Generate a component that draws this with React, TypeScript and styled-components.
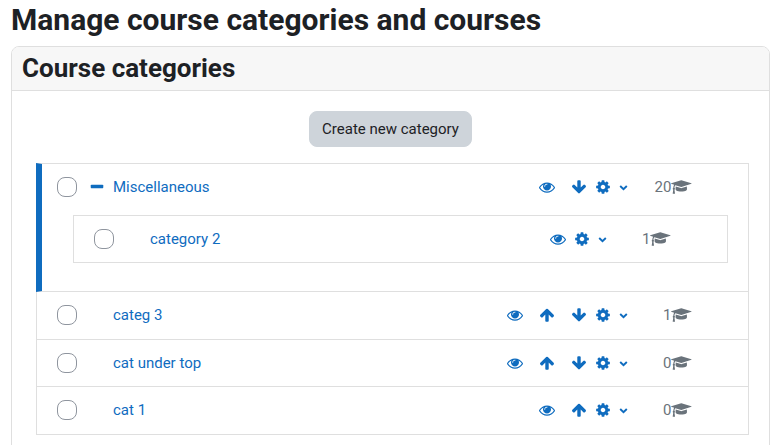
import React from "react";
import styled, { createGlobalStyle } from "styled-components";

const GlobalStyle = createGlobalStyle`
  *, *::before, *::after { box-sizing: border-box; }
  body {
    margin: 0;
    background: #fff;
    color: #1d2125;
    font-family: Roboto, "Liberation Sans", sans-serif;
    font-size: 15px;
    line-height: 1.5;
  }
`;

const blue = "#0f6cbf";
const line = "#dfdfdf";

const glyphs = {
  eye: {
    width: 1792,
    d: "M1664 960q-152-236-381-353 61 104 61 225 0 185-131.5 316.5t-316.5 131.5-316.5-131.5-131.5-316.5q0-121 61-225-229 117-381 353 133 205 333.5 326.5t434.5 121.5 434.5-121.5 333.5-326.5zm-720-384q0-20-14-34t-34-14q-125 0-214.5 89.5t-89.5 214.5q0 20 14 34t34 14 34-14 14-34q0-86 61-147t147-61q20 0 34-14t14-34zm848 384q0 34-20 69-140 230-376.5 368.5t-499.5 138.5-499.5-139-376.5-368q-20-35-20-69t20-69q140-229 376.5-368t499.5-139 499.5 139 376.5 368q20 35 20 69z",
  },
  up: {
    width: 1792,
    d: "M1675 971q0 51-37 90l-75 75q-38 38-91 38-54 0-90-38l-294-293v704q0 52-37.5 84.5t-90.5 32.5h-128q-53 0-90.5-32.5t-37.5-84.5v-704l-294 293q-36 38-90 38t-90-38l-75-75q-38-38-38-90 0-53 38-91l651-651q35-37 90-37 54 0 91 37l651 651q37 39 37 91z",
  },
  down: {
    width: 1792,
    d: "M1675 832q0 53-37 90l-651 652q-39 37-91 37-53 0-90-37l-651-652q-38-36-38-90 0-53 38-91l74-75q39-37 91-37 53 0 90 37l294 294v-704q0-52 38-90t90-38h128q52 0 90 38t38 90v704l294-294q37-37 90-37 52 0 91 37l75 75q37 39 37 91z",
  },
  cog: {
    width: 1792,
    d: "M1152 896q0-106-75-181t-181-75-181 75-75 181 75 181 181 75 181-75 75-181zm512-109v222q0 12-8 23t-20 13l-185 28q-19 54-39 91 35 50 107 138 10 12 10 25t-9 23q-27 37-99 108t-94 71q-12 0-26-9l-138-108q-44 23-91 38-16 136-29 186-7 28-36 28h-222q-14 0-24.5-8.5t-11.5-21.5l-28-184q-49-16-90-37l-141 107q-10 9-25 9-14 0-25-11-126-114-165-168-7-10-7-23 0-12 8-23 15-21 51-66.5t54-70.5q-27-50-41-99l-183-27q-13-2-21-12.5t-8-23.5v-222q0-12 8-23t19-13l186-28q14-46 39-92-40-57-107-138-10-12-10-24 0-10 9-23 26-36 98.5-107.5t94.5-71.5q13 0 26 10l138 107q44-23 91-38 16-136 29-186 7-28 36-28h222q14 0 24.5 8.5t11.5 21.5l28 184q49 16 90 37l142-107q9-9 24-9 13 0 25 10 129 119 165 170 7 8 7 22 0 12-8 23-15 21-51 66.5t-54 70.5q26 50 41 98l183 28q13 2 21 12.5t8 23.5z",
  },
  cap: {
    width: 2304,
    d: "M1774 836l18 316q4 69-82 128t-235 93.5-323 34.5-323-34.5-235-93.5-82-128l18-316 574 181q22 7 48 7t48-7zm530-324q0 23-22 31l-1120 352q-4 1-10 1t-10-1l-652-206q-43 34-71 111.5t-34 178.5q63 36 63 109 0 69-58 107l58 433q2 14-8 25-9 11-24 11h-192q-15 0-24-11-10-11-8-25l58-433q-58-38-58-107 0-73 65-111 11-207 98-330l-333-104q-22-8-22-31t22-31l1120-352q4-1 10-1t10 1l1120 352q22 8 22 31z",
  },
  minus: {
    width: 1792,
    d: "M1600 736v192q0 40-28 68t-68 28h-1216q-40 0-68-28t-28-68v-192q0-40 28-68t68-28h1216q40 0 68 28t28 68z",
  },
};

type GlyphName = keyof typeof glyphs;

const GlyphSvg = styled.svg`
  display: block;
  flex: none;
  height: 16px;
  fill: currentColor;
`;

const Glyph = ({ name }: { name: GlyphName }) => (
  <GlyphSvg viewBox={`0 0 ${glyphs[name].width} 1792`} aria-hidden="true">
    <path d={glyphs[name].d} />
  </GlyphSvg>
);

const Chevron = styled.svg`
  display: block;
  width: 9px;
  height: 16px;
  fill: none;
  stroke: currentColor;
  stroke-width: 1.9;
`;

const Page = styled.main`
  padding: 0 11px;
`;

const PageTitle = styled.h1`
  margin: 0;
  padding: 2px 0 8px;
  font-size: 30px;
  font-weight: 700;
  line-height: 36px;
`;

const Card = styled.section`
  border: 1px solid ${line};
  border-radius: 8px;
  overflow: hidden;
`;

const CardTitle = styled.h2`
  margin: 0;
  padding: 5px 10px;
  border-bottom: 1px solid ${line};
  background: #f7f7f7;
  font-size: 26px;
  font-weight: 700;
  line-height: 33px;
`;

const CardBody = styled.div`
  padding: 20px;
`;

const Toolbar = styled.div`
  display: flex;
  justify-content: center;
  margin-bottom: 16px;
`;

const CreateButton = styled.button`
  padding: 6px 12px;
  border: 1px solid #ced4da;
  border-radius: 8px;
  background: #ced4da;
  color: #1d2125;
  font: inherit;
  line-height: 22px;
  cursor: pointer;
`;

const CategoryList = styled.ul`
  margin: 0 0 0 4px;
  padding: 0;
  list-style: none;
`;

const NestedList = styled.ul`
  margin: 16px 0 16px 16px;
  padding: 0;
  list-style: none;
`;

const CategoryItem = styled.li<{ $expanded: boolean }>`
  padding: 12px 20px 12px ${(p) => (p.$expanded ? 15 : 20)}px;
  border: 1px solid ${line};
  border-left: ${(p) => (p.$expanded ? `6px solid ${blue}` : `1px solid ${line}`)};

  & + & {
    border-top: 0;
  }
`;

const ItemRow = styled.div`
  display: flex;
  align-items: center;
  height: 1.5em;
`;

const CheckBox = styled.input`
  appearance: none;
  flex: none;
  width: 20px;
  height: 20px;
  margin: 0;
  border: 1px solid #8f959e;
  border-radius: 8px;
  background: #fff;

  &:checked {
    background: ${blue};
  }
`;

const IconButton = styled.button`
  display: flex;
  align-items: center;
  gap: 8px;
  padding: 0;
  border: 0;
  background: none;
  color: ${blue};
  cursor: pointer;
`;

const ToggleSlot = styled.div`
  flex: none;
  width: 16px;
  margin: 0 8px 0 12px;
`;

const NameLink = styled.a`
  flex: 1;
  color: ${blue};
  text-decoration: none;
`;

const Actions = styled.div`
  display: flex;
  gap: 8px;
`;

const MoveActions = styled.div`
  display: flex;
  gap: 16px;
`;

const CourseCount = styled.span`
  display: flex;
  align-items: center;
  justify-content: flex-end;
  width: 64px;
  margin-right: 36px;
  color: #6a737b;
`;

type Action = "eye" | "up" | "down";

interface Category {
  name: string;
  courses: number;
  actions: Action[];
  children?: Category[];
}

const labels: Record<Action, string> = {
  eye: "Hide",
  up: "Move up",
  down: "Move down",
};

const categories: Category[] = [
  {
    name: "Miscellaneous",
    courses: 20,
    actions: ["eye", "down"],
    children: [{ name: "category 2", courses: 1, actions: ["eye"] }],
  },
  { name: "categ 3", courses: 1, actions: ["eye", "up", "down"] },
  { name: "cat under top", courses: 0, actions: ["eye", "up", "down"] },
  { name: "cat 1", courses: 0, actions: ["eye", "up"] },
];

const CategoryEntry = ({ category }: { category: Category }) => (
  <CategoryItem $expanded={Boolean(category.children)}>
    <ItemRow>
      <CheckBox type="checkbox" aria-label={`Select ${category.name}`} />
      <ToggleSlot>
        {category.children && (
          <IconButton type="button" aria-label={`Collapse ${category.name}`}>
            <Glyph name="minus" />
          </IconButton>
        )}
      </ToggleSlot>
      <NameLink href="#">{category.name}</NameLink>
      <Actions>
        <MoveActions>
          {category.actions.map((action) => (
            <IconButton key={action} type="button" aria-label={`${labels[action]} ${category.name}`}>
              <Glyph name={action} />
            </IconButton>
          ))}
        </MoveActions>
        <IconButton type="button" aria-label={`Actions for ${category.name}`}>
          <Glyph name="cog" />
          <Chevron viewBox="0 0 9 16" aria-hidden="true">
            <path d="M1.2 7 4.5 10.2l3.3-3.2" />
          </Chevron>
        </IconButton>
      </Actions>
      <CourseCount>
        {category.courses}
        <Glyph name="cap" />
      </CourseCount>
    </ItemRow>
    {category.children && (
      <NestedList>
        {category.children.map((child) => (
          <CategoryEntry key={child.name} category={child} />
        ))}
      </NestedList>
    )}
  </CategoryItem>
);

export default function App() {
  return (
    <Page>
      <GlobalStyle />
      <PageTitle>Manage course categories and courses</PageTitle>
      <Card>
        <CardTitle>Course categories</CardTitle>
        <CardBody>
          <Toolbar>
            <CreateButton type="button">Create new category</CreateButton>
          </Toolbar>
          <CategoryList>
            {categories.map((category) => (
              <CategoryEntry key={category.name} category={category} />
            ))}
          </CategoryList>
        </CardBody>
      </Card>
    </Page>
  );
}
